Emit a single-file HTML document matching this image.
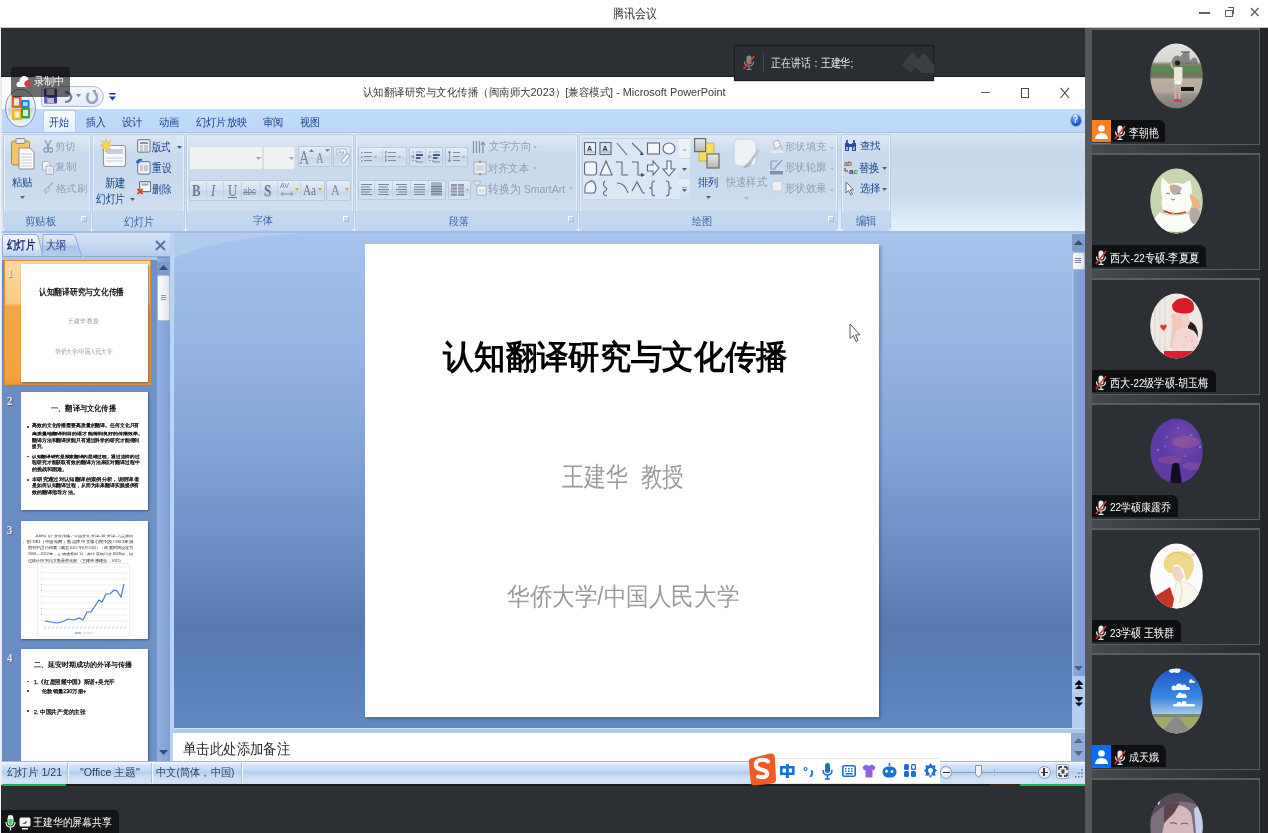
<!DOCTYPE html>
<html><head><meta charset="utf-8">
<style>
*{margin:0;padding:0;box-sizing:border-box}
html,body{width:1268px;height:833px;overflow:hidden;background:#2c2f33;font-family:"Liberation Sans",sans-serif;position:relative}
.a{position:absolute}
.t{position:absolute;white-space:nowrap;line-height:1;transform-origin:0 0}
.serif{font-family:"Liberation Serif",serif}
.grp{position:absolute;top:133.8px;height:97.7px;border:1px solid #bcd0e8;border-radius:3px;background:linear-gradient(#dde8f5,#c9daee 22%,#ccdcef 65%,#d6e6f6);box-shadow:inset 1px 0 0 #e6effa,inset -1px 0 0 #e6effa}
.glab{position:absolute;left:0;right:0;bottom:0;height:19px;background:linear-gradient(#c4daf1,#c0d6ef);border-radius:0 0 3px 3px}
.lnch{position:absolute;top:215.5px;width:6px;height:6px;border:1px solid #a8bcd4;border-left-color:#fff;border-top-color:#fff}
.btn{position:absolute;border:1px solid #b6cae2;border-radius:2px;background:linear-gradient(#e6eef8,#d2dfef 50%,#c6d6ea 51%,#d6e2f1)}
.sep{position:absolute;width:1px;height:17px;background:#c4d4e8}
.thumb{position:absolute;left:20.7px;width:127.8px;height:118px;background:#fff;box-shadow:1px 1px 2px rgba(20,40,80,.55)}
.num{font-size:13px;color:#f4efd6;font-weight:bold;transform:scaleX(.82);text-shadow:1px 1px 1px rgba(60,60,60,.6)}
.ssep{position:absolute;top:763px;width:2px;height:20px;border-left:1px solid #a9bfdc;border-right:1px solid #f2f7fd}
.tile{position:absolute;left:1092px;width:168px;height:117px;background:#2c2f33;border-top:2px solid #5a5d61;border-bottom:1.5px solid #5a5d61;border-right:1.5px solid #5a5d61}
.nb{position:absolute;left:1092px;height:21.5px;background:#0f1011;border-radius:0 6px 0 0}
</style></head><body>
<!-- ===== TOP BAR ===== -->
<div class="a" style="left:0;top:0;width:1268px;height:27px;background:#fff"></div>
<div class="a" style="left:0;top:27px;width:1268px;height:1px;background:#c8c8c8"></div>
<div class="a" style="left:1199px;top:12px;width:11px;height:1.6px;background:#5d6066"></div>
<div class="a" style="left:1225px;top:9.5px;width:7.5px;height:7.5px;border:1.5px solid #5d6066"></div>
<div class="a" style="left:1228px;top:7px;width:6px;height:7px;border-top:1.5px solid #5d6066;border-right:1.5px solid #5d6066"></div>
<svg class="a" style="left:1250px;top:7px" width="10" height="10"><path d="M1 1L8.5 9M8.5 1L1 9" stroke="#5d6066" stroke-width="1.4"/></svg>

<!-- ===== PPT WINDOW ===== -->
<div class="a" style="left:1px;top:76px;width:1084px;height:1px;background:#1a1b1d"></div>
<div class="a" style="left:1px;top:77px;width:1084px;height:32px;background:#fff"></div>
<!-- window ctrls -->
<div class="a" style="left:981px;top:92px;width:9px;height:1.2px;background:#5a5a5a"></div>
<div class="a" style="left:1020.5px;top:87.5px;width:8.5px;height:10.5px;border:1.2px solid #4a4a4a"></div>
<svg class="a" style="left:1060px;top:87px" width="10" height="12"><path d="M0.6 0.8L9 11M9 0.8L0.6 11" stroke="#4a4a4a" stroke-width="1.1"/></svg>
<!-- QAT -->
<div class="a" style="left:41px;top:86px;width:63px;height:21px;border:1px solid #b4bccb;border-radius:3px 11px 11px 3px;background:linear-gradient(#f4f7fb,#e6ecf4)"></div>
<svg class="a" style="left:43px;top:88px" width="16" height="17" viewBox="0 0 16 17">
 <rect x="1" y="0.5" width="13" height="15" rx="1" fill="#3c3c9c"/>
 <rect x="3.5" y="1" width="8" height="6" fill="#e8e8f4"/>
 <rect x="4" y="10" width="7" height="5" fill="#b8b8e0"/>
 <rect x="1" y="8" width="4" height="7" fill="#8080d8" opacity=".6"/>
</svg>
<svg class="a" style="left:62px;top:90px" width="12" height="14" viewBox="0 0 12 14"><path d="M3 2 Q10 3 9 8 Q8 12 3 12" stroke="#6f86ad" stroke-width="2.4" fill="none"/></svg>
<svg class="a" style="left:76px;top:94px" width="5" height="4"><path d="M0 0H5L2.5 3.5Z" fill="#7a8aa0"/></svg>
<svg class="a" style="left:85px;top:89px" width="13" height="15" viewBox="0 0 13 15"><path d="M4 4 A5 5.5 0 1 0 9.5 3.5" stroke="#8fa3c4" stroke-width="2.6" fill="none"/><path d="M7 1 L11 1 L10.5 6Z" fill="#8fa3c4"/></svg>
<svg class="a" style="left:109px;top:93px" width="7" height="8"><rect x="0.5" y="0" width="6" height="1.6" fill="#1f3f8a"/><path d="M0 3.5H7L3.5 7.5Z" fill="#1f3f8a"/></svg>

<!-- tab strip -->
<div class="a" style="left:2px;top:109px;width:1083px;height:23px;background:linear-gradient(#c0dbfc,#bcd7f9)"></div>
<div class="a" style="left:43px;top:110px;width:33px;height:23px;border:1px solid #b9cde5;border-bottom:none;border-radius:3px 3px 0 0;background:linear-gradient(#fafcfe,#e5eef8)"></div>
<!-- help icon -->
<div class="a" style="left:1069.5px;top:114px;width:12px;height:13px;border-radius:50%;background:radial-gradient(circle at 40% 35%,#7fb0ff,#1f55c8 60%,#173c9a);border:1px solid #9cb0cc"></div>
<div class="t" style="left:1072.5px;top:115px;font-size:10px;font-weight:bold;color:#fff;transform:scaleX(.82);transform-origin:0 0">?</div>

<!-- ribbon body -->
<div class="a" style="left:2px;top:132px;width:1083px;height:100px;background:linear-gradient(#d9e5f3 0%,#c7d8ed 18%,#cbdbef 60%,#d9e9f8 85%,#e3f2fd 100%);border-top:1px solid #a6c3e6"></div>
<div class="a" style="left:2px;top:231px;width:1083px;height:2px;background:#9fbde0"></div>
<!-- office button -->
<svg class="a" style="left:4px;top:87px" width="34" height="42" viewBox="0 0 34 42">
 <defs><linearGradient id="ob" x1="0" y1="0" x2="0" y2="1"><stop offset="0" stop-color="#f6f8fb"/><stop offset=".48" stop-color="#dfe6ee"/><stop offset=".52" stop-color="#c6d2e0"/><stop offset="1" stop-color="#f2f6fa"/></linearGradient></defs>
 <ellipse cx="16.5" cy="21" rx="14.9" ry="18.7" fill="url(#ob)" stroke="#8796ac" stroke-width="1"/>
 <ellipse cx="16.5" cy="21" rx="13.5" ry="17.3" fill="none" stroke="#ffffff" stroke-width=".8" opacity=".8"/>
 <rect x="7.5" y="9" width="10" height="12" rx="1" fill="#e8622a"/><rect x="10" y="11.5" width="5" height="7" fill="#e8e8e8"/>
 <rect x="17" y="13" width="8.5" height="8" rx="1" fill="#1a88d8"/><rect x="19" y="15" width="4.5" height="4" fill="#a8d8f8"/>
 <rect x="8" y="22" width="10" height="11" rx="1" fill="#f2b818"/><rect x="10.5" y="24.5" width="5" height="6" fill="#f8f0d8"/>
 <rect x="17" y="21" width="9" height="10.5" rx="1" fill="#3ea03a"/><rect x="19" y="23" width="5" height="6" fill="#e0f0d8"/>
</svg>
<!-- ribbon groups -->
<div class="grp" style="left:3px;width:88px"><div class="glab"></div></div>
<div class="grp" style="left:92px;width:93px"><div class="glab"></div></div>
<div class="grp" style="left:186px;width:168px"><div class="glab"></div></div>
<div class="grp" style="left:355px;width:223px"><div class="glab"></div></div>
<div class="grp" style="left:579px;width:259px"><div class="glab"></div></div>
<div class="grp" style="left:841px;width:50px"><div class="glab"></div></div>
<!-- launchers -->
<div class="lnch" style="left:81px"></div>
<div class="lnch" style="left:343px"></div>
<div class="lnch" style="left:568px"></div>
<div class="lnch" style="left:828px"></div>

<!-- group1 icons -->
<svg class="a" style="left:11px;top:138px" width="24" height="32" viewBox="0 0 24 32">
 <rect x="0.5" y="3" width="18" height="24" rx="2" fill="#f2c46a" stroke="#b88a36" stroke-width="1"/>
 <rect x="5" y="0.5" width="9" height="5" rx="1" fill="#e8e8e8" stroke="#8a8a8a" stroke-width="1"/>
 <path d="M8 10H19L23 14V31H8Z" fill="#fbfbfb" stroke="#8c8c8c" stroke-width="1"/>
 <path d="M10 16H21M10 19H21M10 22H21M10 25H21M10 28H21" stroke="#c8c8c8" stroke-width="1"/>
</svg>
<svg class="a" style="left:20px;top:196px" width="5" height="4"><path d="M0 0H5L2.5 3Z" fill="#4a5d80"/></svg>
<svg class="a" style="left:43px;top:140px" width="10" height="13" viewBox="0 0 10 13"><path d="M2 0L6 8M8 0L4 8" stroke="#8f9ab0" stroke-width="1.3"/><circle cx="3" cy="10" r="2.2" fill="none" stroke="#8f9ab0" stroke-width="1.3"/><circle cx="7.5" cy="10" r="2.2" fill="none" stroke="#8f9ab0" stroke-width="1.3"/></svg>
<svg class="a" style="left:42px;top:161px" width="12" height="14" viewBox="0 0 12 14"><path d="M0.5 0.5H6L8 2.5V9H0.5Z" fill="#f4f6f8" stroke="#a8b0bc"/><path d="M4 5H9.5L11.5 7V13.5H4Z" fill="#f4f6f8" stroke="#a8b0bc"/><path d="M5.5 8H10M5.5 10H10M5.5 12H10" stroke="#c0c6d0" stroke-width=".8"/></svg>
<svg class="a" style="left:43px;top:182px" width="11" height="12" viewBox="0 0 11 12"><path d="M10 0.5L5 6" stroke="#aab4c4" stroke-width="1.8"/><path d="M1 8 L5 5 L7 7.5 L3 11.5 Z" fill="#c8ced8" stroke="#a0aabb" stroke-width=".8"/></svg>

<!-- group2 icons -->
<svg class="a" style="left:100px;top:139px" width="27" height="30" viewBox="0 0 27 30">
 <rect x="3.5" y="6.5" width="22" height="21" rx="2" fill="#f8f9fb" stroke="#8e96a4" stroke-width="1.2"/>
 <rect x="6" y="10" width="17" height="5" fill="#c8ccd8"/>
 <path d="M6 19H23M6 22H23" stroke="#c4c8d2" stroke-width="1"/>
 <path d="M6 0L7 4L10.5 1.5L8.5 5.5L12 6.5L8.5 7.5L10.5 11L7 9L6 13L5 9L1.5 11L3.5 7.5L0 6.5L3.5 5.5L1.5 1.5L5 4Z" fill="#f8dc40" stroke="#e0b020" stroke-width=".5"/>
</svg>
<svg class="a" style="left:130px;top:198px" width="5" height="4"><path d="M0 0H5L2.5 3Z" fill="#4a5d80"/></svg>
<svg class="a" style="left:137px;top:139px" width="14" height="14" viewBox="0 0 14 14"><rect x="0.6" y="0.6" width="12.5" height="12.5" rx="1.5" fill="#f0f2f6" stroke="#7c8594" stroke-width="1.2"/><rect x="3" y="3" width="8" height="2" fill="#8890a0"/><path d="M3 7H6M3 9H6M3 11H6M7 7H11M7 9H11M7 11H11" stroke="#9098a8" stroke-width=".9"/></svg>
<svg class="a" style="left:177px;top:146px" width="5" height="4"><path d="M0 0H5L2.5 3Z" fill="#4a5d80"/></svg>
<svg class="a" style="left:136px;top:159px" width="15" height="16" viewBox="0 0 15 16"><rect x="1.6" y="2.6" width="12.5" height="12.5" rx="1.5" fill="#f0f2f6" stroke="#7c8594" stroke-width="1.2"/><path d="M4 7H7M4 9H7M4 11H7M8 7H12M8 9H12M8 11H12" stroke="#9098a8" stroke-width=".9"/><path d="M1 4 Q2 0 6 1" stroke="#2a5cc8" stroke-width="2" fill="none"/><path d="M0 2L3 5L4 1Z" fill="#2a5cc8"/></svg>
<svg class="a" style="left:137px;top:181px" width="14" height="14" viewBox="0 0 14 14"><rect x="2.6" y="0.6" width="11" height="10" rx="1" fill="#f4f6f9" stroke="#6c7584" stroke-width="1.2"/><rect x="4.5" y="2.5" width="7" height="2" fill="#a0a8b8"/><path d="M0.5 8L5.5 13M5.5 8L0.5 13" stroke="#e03a20" stroke-width="1.8"/></svg>
<!-- group3 font -->
<div class="a" style="left:188.5px;top:146.3px;width:74px;height:24px;background:#eff1f3;border:1px solid #d6dde6"></div>
<div class="a" style="left:263px;top:146.3px;width:32px;height:24px;background:#eff1f3;border:1px solid #d6dde6"></div>
<svg class="a" style="left:256px;top:157px" width="5" height="4"><path d="M0 0H5L2.5 3Z" fill="#9aa4b4"/></svg>
<svg class="a" style="left:288.5px;top:157px" width="5" height="4"><path d="M0 0H5L2.5 3Z" fill="#9aa4b4"/></svg>
<div class="btn" style="left:297.5px;top:145.6px;width:34px;height:21px"></div>
<div class="btn" style="left:333.3px;top:145.6px;width:18px;height:21px"></div>
<div class="btn" style="left:188.5px;top:180.4px;width:136px;height:21px"></div>
<div class="btn" style="left:326.2px;top:180.4px;width:25px;height:21px"></div>
<div class="sep" style="left:206px;top:182px"></div><div class="sep" style="left:223px;top:182px"></div><div class="sep" style="left:241px;top:182px"></div><div class="sep" style="left:260px;top:182px"></div><div class="sep" style="left:277px;top:182px"></div><div class="sep" style="left:300px;top:182px"></div>
<div class="t serif" style="left:299px;top:148px;font-size:19px;color:#7a86a0;transform:scaleX(.75);transform-origin:0 0">A</div>
<svg class="a" style="left:309px;top:149px" width="5" height="3"><path d="M0 3H5L2.5 0Z" fill="#7a86a0"/></svg>
<div class="t serif" style="left:316px;top:152px;font-size:14px;color:#7a86a0;transform:scaleX(.75);transform-origin:0 0">A</div>
<svg class="a" style="left:325px;top:149px" width="5" height="3"><path d="M0 0H5L2.5 3Z" fill="#7a86a0"/></svg>
<svg class="a" style="left:336px;top:148px" width="14" height="16" viewBox="0 0 14 16"><rect x="1" y="1" width="9" height="6" fill="#fff" stroke="#9aa4b8" stroke-width=".8"/><text x="2" y="6" font-size="5" fill="#7a86a0" font-family="Liberation Sans">Aa</text><path d="M12 5 L5 13 L7.5 15.5 L13.5 8Z" fill="#f4f4f8" stroke="#a0a8b8" stroke-width="1"/></svg>
<div class="t serif" style="left:192px;top:183px;font-size:16px;font-weight:bold;color:#6a7894;transform:scaleX(.8);transform-origin:0 0">B</div>
<div class="t serif" style="left:211px;top:183px;font-size:16px;font-style:italic;color:#6a7894;transform:scaleX(.8);transform-origin:0 0">I</div>
<div class="t serif" style="left:228px;top:183px;font-size:16px;color:#6a7894;text-decoration:underline;transform:scaleX(.8);transform-origin:0 0">U</div>
<div class="t" style="left:243px;top:187px;font-size:10px;color:#7a86a0;text-decoration:line-through;transform:scaleX(.8);transform-origin:0 0">abc</div>
<div class="t serif" style="left:264px;top:183px;font-size:16px;font-weight:bold;color:#6a7894;transform:scaleX(.8);transform-origin:0 0;text-shadow:1px 1px 1px #b0b8c8">S</div>
<div class="t" style="left:280px;top:182px;font-size:8px;color:#7a86a0;transform:scaleX(.9);transform-origin:0 0">AV</div>
<svg class="a" style="left:280px;top:191px" width="14" height="6"><path d="M1 3H13M1 3L3.5 1M1 3L3.5 5M13 3L10.5 1M13 3L10.5 5" stroke="#8894aa" stroke-width="1"/></svg>
<svg class="a" style="left:295px;top:188px" width="4" height="3"><path d="M0 0H4L2 3Z" fill="#e0a050"/></svg>
<div class="t serif" style="left:303px;top:184px;font-size:14px;color:#6a7894;transform:scaleX(.8);transform-origin:0 0">Aa</div>
<svg class="a" style="left:318px;top:188px" width="4" height="3"><path d="M0 0H4L2 3Z" fill="#e0a050"/></svg>
<div class="t serif" style="left:331px;top:183px;font-size:15px;color:#7a86a0;transform:scaleX(.8);transform-origin:0 0">A</div>
<svg class="a" style="left:345px;top:188px" width="4" height="3"><path d="M0 0H4L2 3Z" fill="#e0a050"/></svg>

<!-- group4 paragraph -->
<div class="btn" style="left:357.6px;top:147.4px;width:49px;height:20px"></div>
<div class="btn" style="left:408.7px;top:147.4px;width:34px;height:20px"></div>
<div class="btn" style="left:444.6px;top:147.4px;width:23px;height:20px"></div>
<div class="btn" style="left:357.6px;top:179.6px;width:88px;height:20px"></div>
<div class="btn" style="left:448px;top:179.6px;width:23px;height:20px"></div>
<div class="sep" style="left:382px;top:149px;height:16px"></div>
<div class="sep" style="left:425px;top:149px;height:16px"></div>
<div class="sep" style="left:374px;top:181px;height:16px"></div><div class="sep" style="left:392px;top:181px;height:16px"></div><div class="sep" style="left:410px;top:181px;height:16px"></div><div class="sep" style="left:428px;top:181px;height:16px"></div>
<svg class="a" style="left:359px;top:150px" width="110" height="14" viewBox="0 0 110 14">
 <g fill="#8894aa"><rect x="2" y="2" width="1.5" height="1.5"/><rect x="2" y="6" width="1.5" height="1.5"/><rect x="2" y="10" width="1.5" height="1.5"/></g>
 <g stroke="#7f8ba2" stroke-width="1"><path d="M5 2.5H13M5 6.5H13M5 10.5H13"/></g>
 <path d="M15 6H18L16.5 8Z" fill="#9aa4b8"/>
 <g fill="#8894aa"><rect x="26" y="1" width="1.5" height="3"/><rect x="26" y="5" width="1.5" height="3"/><rect x="26" y="9" width="1.5" height="3"/></g>
 <g stroke="#7f8ba2" stroke-width="1"><path d="M29 2.5H37M29 6.5H37M29 10.5H37"/></g>
 <path d="M39 6H42L40.5 8Z" fill="#9aa4b8"/>
 <path d="M57 2H64" stroke="#98a4b8" stroke-width="1.2"/><rect x="57" y="4" width="7" height="2" fill="#4a5c88"/><rect x="57" y="7" width="4.5" height="2" fill="#4a5c88"/><path d="M57 10V12H64" stroke="#7a88a0" stroke-width="1" fill="none"/><path d="M53 2H55M53 10.5H55" stroke="#98a4b8"/><path d="M52 6.5L55 4.5V8.5Z" fill="#8894aa"/>
 <path d="M74 2H81" stroke="#98a4b8" stroke-width="1.2"/><rect x="74" y="4" width="7" height="2" fill="#4a5c88"/><rect x="74" y="7" width="4.5" height="2" fill="#4a5c88"/><path d="M74 10V12H81" stroke="#7a88a0" stroke-width="1" fill="none"/><path d="M70 2H72M70 10.5H72" stroke="#98a4b8"/><path d="M72.5 6.5L69.5 4.5V8.5Z" fill="#8894aa"/>
 <g stroke="#7f8ba2" stroke-width="1"><path d="M94 2.5H101M94 6.5H101M94 10.5H101M90.5 1V12"/></g><path d="M89 3L90.5 1L92 3M89 10L90.5 12L92 10" stroke="#7f8ba2" fill="none"/>
 <path d="M103 6H106L104.5 8Z" fill="#9aa4b8"/>
</svg>
<svg class="a" style="left:359px;top:182px" width="112" height="16" viewBox="0 0 112 16">
 <g stroke="#7884a0" stroke-width="1.1">
  <path d="M2 2.5H13M2 5H11M2 7.5H13M2 10H11M2 12.5H13"/>
  <path d="M19 2.5H30M20 5H29M19 7.5H30M20 10H29M19 12.5H30"/>
  <path d="M37 2.5H48M39 5H48M37 7.5H48M39 10H48M37 12.5H48"/>
  <path d="M55 2.5H66M55 5H66M55 7.5H66M55 10H66M55 12.5H66"/>
 </g>
 <rect x="72" y="2" width="11" height="12" fill="#a8b0c4"/><g stroke="#6e7a94" stroke-width="1"><path d="M72 4.5H83M72 7H83M72 9.5H83M72 12H83"/></g><path d="M72 1H83" stroke="#6e7a94"/>
 <g fill="#8e98ae"><rect x="92" y="2" width="6" height="12"/><rect x="99" y="2" width="6" height="12"/></g><g stroke="#dfe6f0" stroke-width=".8"><path d="M92 5H105M92 8H105M92 11H105"/></g>
 <path d="M107 7H110L108.5 9Z" fill="#9aa4b8"/>
</svg>
<svg class="a" style="left:472px;top:141px" width="15" height="13" viewBox="0 0 15 13"><path d="M1.5 0V12M4.5 0V12M7.5 0V12" stroke="#8090a8" stroke-width="1.2"/><path d="M11 12V2M9 4L11 1L13 4" stroke="#8090a8" stroke-width="1.2" fill="none"/></svg>
<svg class="a" style="left:473px;top:160px" width="14" height="16" viewBox="0 0 14 16"><rect x="1" y="2" width="12" height="12" fill="#eef0f4" stroke="#9aa4b8"/><path d="M3 6H11M3 8H11M3 10H11" stroke="#b4bcca"/><path d="M7 0V3M5.5 1.5L7 3L8.5 1.5M7 16V13M5.5 14.5L7 13L8.5 14.5" stroke="#8894aa" fill="none"/></svg>
<svg class="a" style="left:472px;top:180px" width="15" height="16" viewBox="0 0 15 16"><path d="M1 1H9L7 5H3Z" fill="#dfe4ec" stroke="#a8b0c0" stroke-width=".8"/><rect x="5" y="6" width="9" height="9" fill="#f4f6f9" stroke="#a8b0c0"/><path d="M8 9V13M11 9V13" stroke="#b8c0cc"/></svg>
<svg class="a" style="left:533px;top:146px" width="4" height="3"><path d="M0 0H4L2 3Z" fill="#b0b8c8"/></svg>
<svg class="a" style="left:533px;top:167px" width="4" height="3"><path d="M0 0H4L2 3Z" fill="#b0b8c8"/></svg>
<svg class="a" style="left:569px;top:187px" width="4" height="3"><path d="M0 0H4L2 3Z" fill="#b0b8c8"/></svg>
<!-- group5 drawing -->
<div class="a" style="left:582.3px;top:138.2px;width:108px;height:62px;border:1px solid #c6d6ea;background:#dbe7f5"></div>
<div class="a" style="left:678.7px;top:138.6px;width:11px;height:61px;background:linear-gradient(#eef3f9,#dde8f4)"></div>
<div class="a" style="left:678.7px;top:158px;width:11px;height:21px;border-top:1px solid #c8d6e8;border-bottom:1px solid #c8d6e8;background:linear-gradient(#e4eef9,#cfdff1)"></div>
<div class="a" style="left:678.7px;top:179px;width:11px;height:21px;background:linear-gradient(#e4eef9,#cfdff1)"></div>
<svg class="a" style="left:682px;top:148px" width="5" height="3"><path d="M0 3H5L2.5 0Z" fill="#b8c4d4"/></svg>
<svg class="a" style="left:682px;top:168px" width="5" height="3"><path d="M0 0H5L2.5 3Z" fill="#4a6090"/></svg>
<svg class="a" style="left:682px;top:187px" width="5" height="5"><path d="M0 0H5" stroke="#4a6090"/><path d="M0 2H5L2.5 5Z" fill="#4a6090"/></svg>
<svg class="a" style="left:583px;top:141px" width="95" height="56" viewBox="0 0 95 56">
 <g stroke="#5a6680" stroke-width="1.1" fill="none">
  <rect x="1.5" y="1.5" width="11" height="12" fill="#eef1f6"/>
  <rect x="17" y="1.5" width="11" height="12" fill="#dfe4ec"/>
  <path d="M34 2L44 14"/>
  <path d="M49 2L60 13"/>
  <rect x="64.5" y="2" width="12" height="11" fill="#f2f5f9"/>
  <ellipse cx="86" cy="7.5" rx="6" ry="5.5" fill="#f2f5f9"/>
  <rect x="1.5" y="21" width="12" height="13" rx="2.5" fill="#f2f5f9"/>
  <path d="M17 34L23 20L29 34Z" fill="#f2f5f9"/>
  <path d="M33 21H39V34H45"/>
  <path d="M49 21H55V34H60"/>
  <path d="M64.5 24H70V20L76 27L70 34V30H64.5Z" fill="#f2f5f9"/>
  <path d="M84 20H88V28H92L86 35L80 28H84Z" fill="#f2f5f9"/>
  <path d="M2 52 Q1 42 6 41 Q10 38 12 43 Q14 49 11 52Z" fill="#f2f5f9"/>
  <path d="M22 40 Q19 43 22 46 Q26 48 21 51 Q19 54 24 55"/>
  <path d="M34 42 Q42 42 45 52"/>
  <path d="M49 50 L54 41 L60 52 L62 52"/>
  <path d="M72 40 Q69 40 69 43 L69 46 L67 47 L69 48 L69 52 Q69 55 72 55"/>
  <path d="M83 40 Q86 40 86 43 L86 46 L88 47 L86 48 L86 52 Q86 55 83 55"/>
 </g>
 <path d="M58 11L61 14L57 14Z" fill="#3a4a70"/><path d="M58 32L62 34L58 36Z" fill="#3a4a70"/>
 <text x="4" y="10" font-size="7" font-weight="bold" fill="#333" font-family="Liberation Sans">A</text>
 <text x="19.5" y="10" font-size="7" font-weight="bold" fill="#333" font-family="Liberation Sans">A</text>
 <path d="M3 11H12M18.5 11H27" stroke="#8890a4" stroke-width=".8"/>
</svg>
<svg class="a" style="left:694px;top:138px" width="27" height="32" viewBox="0 0 27 32">
 <rect x="5" y="5" width="15" height="18" fill="#f5dd60" stroke="#c8b040" stroke-width=".8"/>
 <rect x="0.6" y="0.6" width="11" height="13" fill="url(#gg1)" stroke="#6a6a6a" stroke-width="1.2"/>
 <rect x="13" y="16" width="12" height="14" fill="url(#gg1)" stroke="#6a6a6a" stroke-width="1.2"/>
 <defs><linearGradient id="gg1" x1="0" y1="0" x2="0" y2="1"><stop offset="0" stop-color="#e8e8e8"/><stop offset="1" stop-color="#b8b8b8"/></linearGradient></defs>
</svg>
<svg class="a" style="left:706px;top:196px" width="5" height="4"><path d="M0 0H5L2.5 3Z" fill="#4a5d80"/></svg>
<svg class="a" style="left:733px;top:138px" width="28" height="32" viewBox="0 0 28 32">
 <rect x="1" y="1" width="22" height="27" rx="5" fill="#eef1f5" stroke="#c8d0dc" stroke-width="1"/>
 <path d="M26 12 L17 24" stroke="#b8c0cc" stroke-width="2.5"/><path d="M17 23 Q12 26 10 30 Q16 30 19 25Z" fill="#b0b8c4"/>
</svg>
<svg class="a" style="left:744px;top:197px" width="5" height="3"><path d="M0 0H5L2.5 3Z" fill="#a8b0c0"/></svg>
<svg class="a" style="left:770px;top:139px" width="14" height="14" viewBox="0 0 14 14"><path d="M3 3L8 1L11 7L5 10Z" fill="#f0f2f5" stroke="#a8b0bc"/><path d="M11 7Q13 9 12 11" stroke="#b0b8c4" fill="none"/><rect x="0" y="11.5" width="13" height="2.5" fill="#e8ecf2"/></svg>
<svg class="a" style="left:770px;top:159px" width="14" height="16" viewBox="0 0 14 16"><path d="M1 2H8M1 2V10M1 10H6" stroke="#8f9aac" stroke-width="1.2" fill="none"/><path d="M12 1L5 9" stroke="#8f9aac" stroke-width="1.4"/><rect x="0" y="12" width="13" height="3.5" fill="#8090b0"/></svg>
<svg class="a" style="left:771px;top:180px" width="12" height="13" viewBox="0 0 12 13"><rect x="1" y="1" width="10" height="10" rx="2" fill="#eef0f4" stroke="#c0c8d4"/><path d="M3 12H11V4" stroke="#d0d6de" stroke-width="1.5" fill="none"/></svg>
<svg class="a" style="left:830px;top:147px" width="4" height="3"><path d="M0 0H4L2 3Z" fill="#b8c0cc"/></svg>
<svg class="a" style="left:830px;top:168px" width="4" height="3"><path d="M0 0H4L2 3Z" fill="#b8c0cc"/></svg>
<svg class="a" style="left:830px;top:189px" width="4" height="3"><path d="M0 0H4L2 3Z" fill="#b8c0cc"/></svg>

<!-- group6 editing -->
<svg class="a" style="left:844px;top:139px" width="13" height="13" viewBox="0 0 13 13"><path d="M1 4H5V12H1ZM8 4H12V12H8Z" fill="#2c4c98"/><path d="M2 1H4V4H2ZM9 1H11V4H9Z" fill="#3c5cb0"/><rect x="4.5" y="5" width="4" height="3" fill="#2c4c98"/><rect x="2" y="8" width="2" height="3" fill="#9ab4e8"/><rect x="9" y="8" width="2" height="3" fill="#9ab4e8"/></svg>
<svg class="a" style="left:844px;top:160px" width="14" height="15" viewBox="0 0 14 15"><text x="0" y="6" font-size="7" fill="#444" font-family="Liberation Sans">ab</text><text x="5" y="14" font-size="8" font-weight="bold" fill="#444" font-family="Liberation Sans">a</text><text x="9.5" y="14" font-size="8" font-weight="bold" fill="#20a040" font-family="Liberation Sans">c</text><path d="M1 8V11H4" stroke="#333" fill="none" stroke-width=".9"/></svg>
<svg class="a" style="left:845px;top:181px" width="10" height="15" viewBox="0 0 10 15"><path d="M1 1V12L3.5 9.5L6 14L7.5 13.2L5.2 8.8H8.5Z" fill="#f6f7f9" stroke="#5a6272" stroke-width=".9"/></svg>
<svg class="a" style="left:882px;top:167px" width="5" height="3"><path d="M0 0H5L2.5 3Z" fill="#4a5d80"/></svg>
<svg class="a" style="left:882px;top:188px" width="5" height="3"><path d="M0 0H5L2.5 3Z" fill="#4a5d80"/></svg>
<!-- ===== BODY AREA ===== -->
<div class="a" style="left:2px;top:233px;width:1083px;height:528px;background:#a9c7ef"></div>
<!-- left pane -->
<div class="a" style="left:2px;top:233px;width:168px;height:24px;background:linear-gradient(#d6e5f7,#b4cdee)"></div>
<svg class="a" style="left:2px;top:234px" width="168" height="23" viewBox="0 0 168 23">
 <defs>
  <linearGradient id="tg1" x1="0" y1="0" x2="0" y2="1"><stop offset="0" stop-color="#f4f8fd"/><stop offset=".55" stop-color="#dce8f8"/><stop offset="1" stop-color="#b6cff0"/></linearGradient>
  <linearGradient id="tg2" x1="0" y1="0" x2="0" y2="1"><stop offset="0" stop-color="#e2ebf8"/><stop offset=".45" stop-color="#c8d9f1"/><stop offset=".55" stop-color="#a8c2ea"/><stop offset="1" stop-color="#b4ccee"/></linearGradient>
 </defs>
 <path d="M40 22.5 L76 22.5 L80 22.5 L73 2 Q72 0.5 70 0.5 L41 0.5 Z" fill="url(#tg2)" stroke="#8eaad4" stroke-width="1"/>
 <path d="M0.5 22.5 L0.5 2.5 Q0.5 0.5 3 0.5 L33 0.5 Q35 0.5 36 2 L41 22.5Z" fill="url(#tg1)" stroke="#8eaad4" stroke-width="1"/>
 <path d="M82 22.5H168" stroke="#8eaad4"/>
</svg>
<svg class="a" style="left:155px;top:240px" width="11" height="11"><path d="M1 1L10 10M10 1L1 10" stroke="#5072a8" stroke-width="1.8"/></svg>
<!-- thumbnails pane -->
<div class="a" style="left:2px;top:257px;width:168px;height:504px;background:linear-gradient(90deg,#6a8ec3,#6b8fc3 60%,#6f93c8)"></div>

<div class="a" style="left:2px;top:257px;width:155px;height:3px;background:#aac6ee"></div>
<!-- scrollbar -->
<div class="a" style="left:157px;top:258px;width:13px;height:503px;background:linear-gradient(90deg,#8eb0e0,#7f9fd0)"></div>
<div class="a" style="left:157px;top:261.7px;width:13px;height:13px;background:#7b9bcc"></div>
<svg class="a" style="left:159px;top:265px" width="9" height="5"><path d="M0 5H9L4.5 0Z" fill="#3c4c6c"/></svg>
<div class="a" style="left:157px;top:275px;width:12.5px;height:46px;border-radius:2px;background:linear-gradient(90deg,#fdfdfe,#dfe5ee);border:1px solid #b0bccc"></div>
<svg class="a" style="left:161px;top:295px" width="5" height="6"><path d="M0 0.5H5M0 2.5H5M0 4.5H5" stroke="#8a96a8"/></svg>
<svg class="a" style="left:159px;top:750px" width="9" height="5"><path d="M0 0H9L4.5 5Z" fill="#3c4c6c"/></svg>
<div class="a" style="left:170px;top:233px;width:3px;height:528px;background:#b6d2f6"></div>
<!-- selection highlight -->
<div class="a" style="left:3.5px;top:260.4px;width:147.5px;height:125px;border:1px solid #e4923a;background:linear-gradient(#fbd9a0,#f8cb86 34%,#f3a744 37%,#f2a440 92%,#ee9a34)"></div>
<!-- slide thumbs -->
<div class="thumb" style="top:264.4px"></div>
<div class="thumb" style="top:392.2px"></div>
<div class="thumb" style="top:520.7px"></div>
<div class="thumb" style="top:648.9px;height:113px"></div>
<div class="t serif num" style="left:7px;top:266px">1</div>
<div class="t serif num" style="left:6.5px;top:394px;color:#e4ecf4">2</div>
<div class="t serif num" style="left:6.5px;top:523px;color:#e4ecf4">3</div>
<div class="t serif num" style="left:6.5px;top:651px;color:#e4ecf4">4</div>
<!-- thumb 2 content -->
<div class="a" style="left:27.3px;top:426px;width:1.5px;height:1.5px;background:#555"></div>
<div class="a" style="left:27.3px;top:455.5px;width:1.5px;height:1.5px;background:#555"></div>
<div class="a" style="left:27.3px;top:479px;width:1.5px;height:1.5px;background:#555"></div>
<!-- thumb 3 chart -->
<svg class="a" style="left:37px;top:563px" width="94" height="75" viewBox="0 0 94 75">
 <rect x="0.5" y="0.5" width="92" height="73" fill="#fff" stroke="#eceef2"/>
 <g stroke="#e4e6ea" stroke-width=".7"><path d="M6 4H90M6 10H90M6 16H90M6 22H90M6 28H90M6 34H90M6 40H90M6 46H90M6 52H90M6 58H90"/></g>
 <g fill="#b8bcc4"><rect x="4" y="3" width="1" height="1"/><rect x="4" y="9" width="1" height="1"/><rect x="4" y="15" width="1" height="1"/><rect x="4" y="21" width="1" height="1"/><rect x="4" y="27" width="1" height="1"/><rect x="4" y="33" width="1" height="1"/><rect x="4" y="39" width="1" height="1"/><rect x="4" y="45" width="1" height="1"/><rect x="4" y="51" width="1" height="1"/><rect x="4" y="57" width="1" height="1"/></g>
 <path d="M8 58 L14 59 L20 60 L26 58.5 L31 56 L37 57 L42 55 L46 57 L50 49 L54 49 L58 43 L62 37 L65 39 L69 31 L73 31 L77 27 L80 28 L84 34 L87 21" stroke="#4a78c8" stroke-width="1.2" fill="none"/>
 <g stroke="#c0c4cc" stroke-width=".8"><path d="M7 66L9 63M11 66L13 63M15 66L17 63M19 66L21 63M23 66L25 63M27 66L29 63M31 66L33 63M35 66L37 63M39 66L41 63M43 66L45 63M47 66L49 63M51 66L53 63M55 66L57 63M59 66L61 63M63 66L65 63M67 66L69 63M71 66L73 63M75 66L77 63M79 66L81 63M83 66L85 63M87 66L89 63"/></g>
 <path d="M38 70H44" stroke="#4a78c8" stroke-width="1"/><path d="M46 70H56" stroke="#d0d4da" stroke-width="1"/>
</svg>
<div class="a" style="left:27.3px;top:680.5px;width:1.5px;height:1.5px;background:#555"></div>
<div class="a" style="left:27.3px;top:690px;width:1.5px;height:1.5px;background:#555"></div>
<div class="a" style="left:27.3px;top:710px;width:1.5px;height:1.5px;background:#555"></div>

<!-- main slide area -->
<div class="a" style="left:173px;top:233px;width:899px;height:495px;overflow:hidden;background:linear-gradient(#a5c3eb 0%,#97b6e2 20%,#86a8d8 40%,#6d91c6 62%,#5679b0 80%,#5a80b9 90%,#6189c3 100%)">
  <svg class="a" style="left:0;top:0" width="200" height="40"><path d="M0 0 H130 Q40 6 0 26 Z" fill="rgba(255,255,255,.16)"/></svg>
</div>
<div class="a" style="left:173px;top:233px;width:1px;height:495px;background:#c0d8f6"></div>
<!-- slide -->
<div class="a" style="left:367px;top:246px;width:514px;height:473px;background:rgba(30,50,90,.35);filter:blur(1.5px)"></div>
<div class="a" style="left:365px;top:244px;width:514.3px;height:473px;background:#fff"></div>
<!-- main scrollbar -->
<div class="a" style="left:1071.6px;top:233.8px;width:13.4px;height:494.5px;background:linear-gradient(90deg,#a6c4ee 0,#a6c4ee 1px,#86a6d8 2px,#7e9ecf)"></div>
<div class="a" style="left:1071.6px;top:233.8px;width:13.4px;height:17px;background:#7e9dcc"></div>
<svg class="a" style="left:1074px;top:240px" width="9" height="5"><path d="M0 5H9L4.5 0Z" fill="#3e4e6e"/></svg>
<div class="a" style="left:1071.6px;top:252px;width:13.4px;height:18px;border-radius:2px;background:linear-gradient(90deg,#fdfdfe,#dde4ee);border:1px solid #aab8cc"></div>
<svg class="a" style="left:1075px;top:258px" width="6" height="6"><path d="M0 0.5H6M0 2.5H6M0 4.5H6" stroke="#7a8698"/></svg>

<svg class="a" style="left:1074px;top:666px" width="9" height="5"><path d="M0 0H9L4.5 5Z" fill="#4e5e7e"/></svg>
<div class="a" style="left:1071.6px;top:676px;width:13.4px;height:52px;background:#b0cdf2"></div>
<svg class="a" style="left:1074.5px;top:680px" width="8" height="10"><path d="M0 4H8L4 0Z M0 9H8L4 5Z" fill="#111"/><path d="M0 4.5H8" stroke="#111"/></svg>
<svg class="a" style="left:1074.5px;top:697px" width="8" height="10"><path d="M0 1H8L4 5Z M0 5.5H8L4 9.5Z" fill="#111"/><path d="M0 0.5H8" stroke="#111"/></svg>
<!-- notes -->
<div class="a" style="left:173px;top:728px;width:912px;height:5px;background:#acc9f0;border-top:1px solid #cfe2fa"></div>
<div class="a" style="left:173px;top:733px;width:898px;height:28px;background:#fff"></div>
<div class="a" style="left:1071px;top:733px;width:14px;height:28px;background:#8eabd8"></div>
<svg class="a" style="left:1074px;top:738px" width="9" height="5"><path d="M0 5H9L4.5 0Z" fill="#56668a"/></svg>
<svg class="a" style="left:1074px;top:751px" width="9" height="5"><path d="M0 0H9L4.5 5Z" fill="#56668a"/></svg>
<!-- status bar -->
<div class="a" style="left:2px;top:761px;width:1083px;height:24px;background:linear-gradient(#f6fbff 0,#d4e4fa 14%,#c0d8f4 38%,#b4cef2 46%,#c8dcf2 62%,#d6e4f4 85%,#c6dbf4 92%,#dcecfc 100%);border-top:1px solid #a6b6c8"></div>
<div class="ssep" style="left:67px"></div>
<div class="ssep" style="left:150.5px"></div>
<div class="ssep" style="left:240.5px"></div>
<div class="a" style="left:2px;top:784px;width:64px;height:2px;background:#1fae5a"></div>
<div class="a" style="left:66px;top:784px;width:924px;height:2px;background:#1c1a19"></div>
<div class="a" style="left:990px;top:784px;width:30px;height:2px;background:#3a2b22"></div>
<div class="a" style="left:1020px;top:784px;width:65px;height:2px;background:#1fb060"></div>
<!-- zoom controls -->
<div class="a" style="left:940px;top:765.5px;width:12px;height:13px;border-radius:50%;border:1px solid #8ea2c0;background:radial-gradient(circle at 50% 30%,#fff,#d4def0)"></div>
<div class="a" style="left:942.5px;top:771.5px;width:7px;height:1.6px;background:#303848"></div>
<div class="a" style="left:952px;top:772px;width:85px;height:1px;background:#8aa0c0"></div>
<div class="a" style="left:994px;top:769px;width:1px;height:7px;background:#a8b8d0"></div>
<svg class="a" style="left:975px;top:765px" width="7" height="13"><path d="M0.5 0.5H6.5V9L3.5 12.5L0.5 9Z" fill="#f0f4f9" stroke="#8494ac"/></svg>
<div class="a" style="left:1037.8px;top:765.5px;width:13px;height:13.5px;border-radius:50%;border:1px solid #8ea2c0;background:radial-gradient(circle at 50% 30%,#fff,#d4def0)"></div>
<div class="a" style="left:1040.5px;top:771.5px;width:7.5px;height:1.8px;background:#303848"></div>
<div class="a" style="left:1043.4px;top:768.3px;width:1.8px;height:8px;background:#303848"></div>
<div class="a" style="left:1056px;top:764px;width:13.3px;height:14.6px;border:1px solid #9aacc6;border-radius:2px;background:#e8eef6"></div>
<svg class="a" style="left:1058px;top:766px" width="10" height="11"><path d="M1 1H4M1 1V4M9 1H6M9 1V4M1 10H4M1 10V7M9 10H6M9 10V7" stroke="#222" stroke-width="1.3"/><rect x="3.5" y="3.5" width="3" height="4" fill="#444"/></svg>
<svg class="a" style="left:1074px;top:768px" width="10" height="12"><g fill="#6a7a96"><rect x="7" y="1" width="1.5" height="1.5"/><rect x="4" y="4.5" width="1.5" height="1.5"/><rect x="7" y="4.5" width="1.5" height="1.5"/><rect x="1" y="8" width="1.5" height="1.5"/><rect x="4" y="8" width="1.5" height="1.5"/><rect x="7" y="8" width="1.5" height="1.5"/></g></svg>
<!-- IME toolbar -->
<div class="a" style="left:772.3px;top:757.5px;width:167.3px;height:26.5px;background:#fff;border:1px solid #e4e6ea;border-right:none"></div>
<svg class="a" style="left:748px;top:752px" width="29" height="34" viewBox="0 0 29 34">
 <path d="M4 6 L22 1.5 Q26 0.8 26.8 4.5 L28 27 Q28.3 30.8 24.5 31.5 L7 33.5 Q3.2 34 2.7 30.5 L0.8 10 Q0.5 6.8 4 6Z" fill="#f05a24"/>
 <path d="M20 9.5 Q17 7 12 8 Q7 9.5 8 14 Q9 17 15 18 Q20 19 19 23 Q17.5 26.5 10 24.5" stroke="#fff" stroke-width="4" fill="none" stroke-linecap="round"/>
</svg>
<svg class="a" style="left:780px;top:764px" width="15" height="14" viewBox="0 0 15 14"><rect x="1.3" y="3.3" width="12" height="6.5" fill="none" stroke="#1a6fd8" stroke-width="2.6"/><rect x="6" y="0" width="2.8" height="14" fill="#1a6fd8"/></svg>
<svg class="a" style="left:803px;top:766px" width="11" height="11" viewBox="0 0 11 11"><circle cx="2.5" cy="3" r="1.5" fill="none" stroke="#1a6fd8" stroke-width="1.2"/><path d="M8 5 Q9.5 5 9 8 Q8.5 10 7 11" stroke="#1a6fd8" stroke-width="2" fill="none"/></svg>
<svg class="a" style="left:822px;top:763px" width="11" height="17" viewBox="0 0 11 17"><rect x="3" y="0" width="5" height="10" rx="2.5" fill="#1a6fd8"/><path d="M1 7 Q1 12 5.5 12 Q10 12 10 7" stroke="#1a6fd8" stroke-width="1.5" fill="none"/><path d="M5.5 12V15.5M3 16H8" stroke="#1a6fd8" stroke-width="1.5"/></svg>
<svg class="a" style="left:842px;top:765px" width="14" height="12" viewBox="0 0 14 12"><rect x="0.8" y="0.8" width="12.4" height="10.4" rx="1.5" fill="none" stroke="#1a6fd8" stroke-width="1.6"/><g fill="#1a6fd8"><rect x="3" y="3" width="1.5" height="1.5"/><rect x="6" y="3" width="1.5" height="1.5"/><rect x="9" y="3" width="1.5" height="1.5"/><rect x="3" y="5.5" width="1.5" height="1.5"/><rect x="6" y="5.5" width="1.5" height="1.5"/><rect x="9" y="5.5" width="1.5" height="1.5"/><rect x="3.5" y="8" width="7" height="1.5"/></g></svg>
<svg class="a" style="left:862px;top:764px" width="14" height="14" viewBox="0 0 14 14"><defs><linearGradient id="shirt" x1="0" y1="0" x2="1" y2="1"><stop offset="0" stop-color="#6a6cf0"/><stop offset="1" stop-color="#b05ad8"/></linearGradient></defs><path d="M4 0.5 L7 2 L10 0.5 L13.5 3 L12 6.5 L10.5 6 V13.5 H3.5 V6 L2 6.5 L0.5 3Z" fill="url(#shirt)"/></svg>
<svg class="a" style="left:881.5px;top:763px" width="15" height="15" viewBox="0 0 15 15"><path d="M7.5 0V3" stroke="#1a6fd8" stroke-width="1.5"/><rect x="0.5" y="3.5" width="14" height="11" rx="5.5" fill="#1a6fd8"/><rect x="3" y="7.5" width="3" height="1.4" fill="#fff"/><rect x="3.8" y="6.6" width="1.4" height="3.2" fill="#fff"/><circle cx="10" cy="8.5" r="1.5" fill="#fff"/></svg>
<svg class="a" style="left:904px;top:764px" width="12" height="13" viewBox="0 0 12 13"><rect x="0" y="0" width="5" height="6" rx="1.5" fill="#1a6fd8"/><rect x="7" y="0" width="5" height="6" rx="1.5" fill="#1a6fd8"/><rect x="0" y="7" width="5" height="6" rx="1.5" fill="#1a6fd8"/><rect x="7" y="7" width="5" height="6" rx="1.5" fill="#1a6fd8"/><rect x="8.2" y="1.2" width="2.6" height="3.6" rx="1.2" fill="#fff"/></svg>
<svg class="a" style="left:923.5px;top:763px" width="13" height="15" viewBox="0 0 13 15"><path d="M6.5 0 L8.2 2.5 L11.5 2.2 L11 5.5 L13 7.5 L11 9.5 L11.5 12.8 L8.2 12.5 L6.5 15 L4.8 12.5 L1.5 12.8 L2 9.5 L0 7.5 L2 5.5 L1.5 2.2 L4.8 2.5Z" fill="#1a6fd8"/><circle cx="6.5" cy="7.5" r="2.5" fill="#fff"/><rect x="5.5" y="9.5" width="2" height="3" fill="#fff"/></svg>

<!-- speaking badge -->
<div class="a" style="left:734px;top:45px;width:200px;height:36px;background:#2a2d31;border:1px solid #1b1d20;box-shadow:0 0 1px #222"></div>
<svg class="a" style="left:743px;top:55px" width="12" height="15" viewBox="0 0 12 15"><rect x="3.5" y="0.5" width="5" height="9" rx="2.5" fill="#8a8c90"/><path d="M1.5 6.5 Q1.5 11 6 11 Q10.5 11 10.5 6.5" stroke="#8a8c90" stroke-width="1.2" fill="none"/><path d="M6 11V14M3.5 14.3H8.5" stroke="#8a8c90" stroke-width="1.2"/><path d="M0.5 14 L11.5 0.8" stroke="#d8402c" stroke-width="1.4"/></svg>
<div class="a" style="left:763px;top:53px;width:1px;height:20px;background:#45484d"></div>
<svg class="a" style="left:902px;top:51px" width="32" height="24" viewBox="0 0 32 24"><path d="M0 14 L9 2 Q10.5 0.5 12 2 L17 9 L9 22 Z" fill="#3a3d42"/><path d="M11 15 L20 3 Q21.5 1.5 23 3 L32 14 L32 22 L20 22Z" fill="#3d4045"/></svg>

<!-- mouse cursor -->
<svg class="a" style="left:848.5px;top:323px" width="12" height="20" viewBox="0 0 12 20"><path d="M1 1 V15.5 L4.5 12.5 L7 18.5 L9 17.6 L6.6 11.8 H11 Z" fill="#fff" stroke="#555" stroke-width="1"/></svg>
<!-- ===== RIGHT PANEL ===== -->
<div class="a" style="left:1085px;top:28px;width:7px;height:805px;background:#55585c"></div>
<div class="a" style="left:1092px;top:28px;width:176px;height:805px;background:linear-gradient(90deg,#45484c,#36393d 50%,#27292c)"></div>
<div class="a" style="left:1260px;top:28px;width:8px;height:805px;background:#232528"></div>
<div class="tile" style="top:28px"></div>
<div class="tile" style="top:153px"></div>
<div class="tile" style="top:278px"></div>
<div class="tile" style="top:403px"></div>
<div class="tile" style="top:528px"></div>
<div class="tile" style="top:653px"></div>
<div class="tile" style="top:778px;height:60px;border-bottom:none"></div>
<!-- avatars -->
<svg class="a" style="left:1149.8px;top:42.5px" width="53" height="66" viewBox="0 0 53 66">
 <defs><clipPath id="c1"><ellipse cx="26.5" cy="33" rx="26.3" ry="32.6"/></clipPath>
 <linearGradient id="a1" x1="0" y1="0" x2="0" y2="1"><stop offset="0" stop-color="#e4e4e4"/><stop offset=".28" stop-color="#d4d6d2"/><stop offset=".32" stop-color="#8a8272"/><stop offset=".35" stop-color="#5f8a56"/><stop offset=".45" stop-color="#5a8650"/><stop offset=".47" stop-color="#7a6e60"/><stop offset=".52" stop-color="#6e7a5a"/><stop offset=".55" stop-color="#bcb0a2"/><stop offset=".74" stop-color="#b4a89a"/><stop offset=".78" stop-color="#9a948c"/><stop offset="1" stop-color="#7e7a78"/></linearGradient></defs>
 <g clip-path="url(#c1)"><rect width="53" height="66" fill="url(#a1)"/>
  <path d="M22 17 Q26 10 30 14 L34 9 H39 L40 18 Q44 12 47 16 L48 21 H21Z" fill="#6a6c6a" opacity=".75"/>
  <path d="M31 9H40" stroke="#444" stroke-width="1"/>
  <path d="M24 26 L21 22 L22 20" stroke="#d8b8a8" stroke-width="1.5" fill="none"/>
  <rect x="24" y="24" width="8.5" height="14" rx="1" fill="#ece6d2"/><rect x="24.5" y="38" width="7" height="3.5" fill="#f4f4f4"/>
  <path d="M25.5 41.5V56M29.5 41.5V56" stroke="#d8b0a0" stroke-width="2"/><rect x="24" y="56" width="7.5" height="3" fill="#e8386a"/>
  <ellipse cx="27.5" cy="20" rx="2.6" ry="2.4" fill="#1e1e1e"/><rect x="31" y="44" width="13" height="4" fill="#161616"/>
 </g></svg>
<svg class="a" style="left:1149.8px;top:167.5px" width="53" height="66" viewBox="0 0 53 66">
 <defs><clipPath id="c2"><ellipse cx="26.5" cy="33" rx="26.3" ry="32.6"/></clipPath></defs>
 <g clip-path="url(#c2)"><rect width="53" height="66" fill="#c9d5ae"/>
  <path d="M12 30 Q10 20 12 9 L19 16 Q28 14 33 16 L40 12 Q43 22 41 30 Q44 38 38 44 Q30 48 18 46 Q10 42 12 30Z" fill="#fbfbf8"/>
  <path d="M10 44 Q20 50 36 46 L46 48 L52 56 L53 66 H0 V56Z" fill="#fbfbf8"/>
  <path d="M40 26 Q50 30 51 40 L44 42 Q42 34 40 30Z" fill="#ecb280"/>
  <path d="M41 40 Q49 38 51 48 Q50 56 43 56 Q37 50 41 40Z" fill="#b2aaa4"/>
  <path d="M20 17 Q27 15 32 20 Q30 27 24 27 Q19 24 20 17Z" fill="#b6aeaa"/><path d="M20 20 Q22 18 24 20" stroke="#e8a070" stroke-width="2.2"/>
  <path d="M16 26 Q18 24 20 26M27 26 Q29 24 31 26M21 31 Q23 33 25 31" stroke="#555" stroke-width=".8" fill="none"/>
  <path d="M14 43 Q24 48 36 44" stroke="#d03a2e" stroke-width="1.6" fill="none"/><circle cx="23" cy="46" r="1.3" fill="#e8c040"/>
  <path d="M53 58 V66 H0 V60 Q14 64 28 64 Q42 63 53 58Z" fill="#8aaa72"/>
 </g></svg>
<svg class="a" style="left:1149.8px;top:292.5px" width="53" height="66" viewBox="0 0 53 66">
 <defs><clipPath id="c3"><ellipse cx="26.5" cy="33" rx="26.3" ry="32.6"/></clipPath></defs>
 <g clip-path="url(#c3)"><rect width="53" height="66" fill="#efe9e6"/>
  <path d="M5 0V66M10 0V66M15 0V66" stroke="#e2dad6" stroke-width="1.5"/>
  <path d="M38 28 Q48 30 48 44 L44 52 L38 46Z" fill="#2a2020"/>
  <path d="M24 22 Q30 16 38 20 L40 30 Q36 38 28 34 Q24 30 24 22Z" fill="#eed2c8"/>
  <path d="M22 12 Q26 4 36 5 Q45 7 44 16 Q42 22 30 20 Q22 20 22 12Z" fill="#d81c2a"/>
  <path d="M22 26 Q20 20 24 20 L26 24 Q30 22 32 28 L30 44 Q28 52 24 56 L20 54 Q22 40 22 26Z" fill="#f0c8bc"/>
  <path d="M26 38 Q34 32 44 38 Q50 44 50 58 L48 62 H24 Q20 52 26 38Z" fill="#f2d8d4"/>
  <g fill="#e0a8a8"><circle cx="36" cy="44" r=".8"/><circle cx="42" cy="48" r=".8"/><circle cx="34" cy="52" r=".8"/><circle cx="44" cy="54" r=".8"/></g>
  <rect x="14" y="58" width="36" height="8" fill="#d82030"/>
  <path d="M11 35 Q9 32 12 31.5 Q13.5 31.5 13.5 33 Q13.5 31.5 15 31.5 Q18 32 16 35 L13.5 38Z" fill="#e8382a"/>
 </g></svg>
<svg class="a" style="left:1149.8px;top:417.5px" width="53" height="66" viewBox="0 0 53 66">
 <defs><clipPath id="c4"><ellipse cx="26.5" cy="33" rx="26.3" ry="32.6"/></clipPath>
 <radialGradient id="a4" cx=".6" cy=".35" r=".8"><stop offset="0" stop-color="#7a4aaa"/><stop offset=".5" stop-color="#5a3aa8"/><stop offset="1" stop-color="#6a3a9a"/></radialGradient></defs>
 <g clip-path="url(#c4)"><rect width="53" height="66" fill="url(#a4)"/>
  <ellipse cx="36" cy="24" rx="14" ry="6" fill="#a05a9a" opacity=".55"/><ellipse cx="20" cy="42" rx="12" ry="4" fill="#a05090" opacity=".5"/><ellipse cx="42" cy="48" rx="10" ry="4" fill="#9a5a9a" opacity=".45"/>
  <g fill="#fff" opacity=".8"><circle cx="8" cy="32" r=".7"/><circle cx="17" cy="19" r=".6"/><circle cx="28" cy="10" r=".6"/><circle cx="41" cy="17" r=".6"/><circle cx="50" cy="29" r=".7"/><circle cx="15" cy="28" r=".5"/><circle cx="35" cy="38" r=".5"/></g>
  <path d="M20 66 L22 47 Q25 43 29 46 L32 66Z" fill="#140c1e"/>
 </g></svg>
<svg class="a" style="left:1149.8px;top:542.5px" width="53" height="66" viewBox="0 0 53 66">
 <defs><clipPath id="c5"><ellipse cx="26.5" cy="33" rx="26.3" ry="32.6"/></clipPath></defs>
 <g clip-path="url(#c5)"><rect width="53" height="66" fill="#fbfbfb"/>
  <path d="M26 40 Q34 36 44 44 L52 56 L50 66 H22Z" fill="#f8f6ee" stroke="#dcd4bc" stroke-width=".6"/>
  <path d="M30 36 L32 48 L30 60" stroke="#e6d8a8" stroke-width="1" fill="none"/>
  <path d="M22 26 Q24 22 30 24 L34 34 Q30 40 26 38 Q22 34 22 26Z" fill="#f2d4c8"/>
  <path d="M14 24 Q12 12 24 9 Q36 6 42 14 Q46 22 42 30 Q40 36 36 38 L34 28 Q30 20 24 22 L22 30 Q16 30 14 24Z" fill="#f0d88c"/>
  <path d="M18 14 Q22 8 30 10M30 10 L40 16" stroke="#d8b860" stroke-width=".8" fill="none"/>
  <path d="M40 12 L46 8 L44 14Z" fill="#f0c8c0"/>
  <path d="M4 54 L20 44 L24 56 L22 66 H8Z" fill="#c43424"/>
 </g></svg>
<svg class="a" style="left:1149.8px;top:667.5px" width="53" height="66" viewBox="0 0 53 66">
 <defs><clipPath id="c6"><ellipse cx="26.5" cy="33" rx="26.3" ry="32.6"/></clipPath>
 <linearGradient id="a6" x1="0" y1="0" x2="0" y2="1"><stop offset="0" stop-color="#1a58c8"/><stop offset=".45" stop-color="#3a86de"/><stop offset=".68" stop-color="#9cc4ec"/><stop offset=".72" stop-color="#c0d4e0"/></linearGradient></defs>
 <g clip-path="url(#c6)"><rect width="53" height="66" fill="url(#a6)"/>
  <g fill="#fff" opacity=".95"><circle cx="22" cy="2" r="3"/><circle cx="27" cy="1.5" r="3.5"/><circle cx="24" cy="20" r="2.5"/><circle cx="29" cy="18.5" r="3"/><circle cx="34" cy="19" r="2.5"/><rect x="22" y="19" width="18" height="3" rx="1.5"/><circle cx="30" cy="27" r="2.5"/><circle cx="34" cy="27.5" r="2"/><rect x="26" y="27" width="11" height="3" rx="1.5"/><circle cx="29" cy="36" r="2.3"/><circle cx="34" cy="35.5" r="2.5"/><rect x="23" y="36" width="22" height="2.5" rx="1.2"/><circle cx="41" cy="13" r="1.8"/><rect x="39" y="13" width="6" height="1.8" rx=".9"/></g>
  <rect x="0" y="46" width="53" height="3" fill="#7a8a70"/>
  <rect x="0" y="49" width="53" height="17" fill="#a0a866"/>
  <path d="M24 49 L29 49 L42 66 L10 66Z" fill="#8c8a88"/>
 </g></svg>
<svg class="a" style="left:1149.8px;top:792.5px" width="53" height="41" viewBox="0 0 53 41">
 <defs><clipPath id="c7"><ellipse cx="26.5" cy="33" rx="26.3" ry="32.6"/></clipPath></defs>
 <g clip-path="url(#c7)"><rect width="53" height="66" fill="#7c6e7c"/>
  <path d="M0 0 H53 V14 Q36 6 22 10 Q8 14 0 26Z" fill="#584a56"/>
  <path d="M16 22 Q18 12 28 12 Q40 14 42 24 L44 41 H12Z" fill="#d6b8bc"/>
  <path d="M14 14 Q20 8 30 10 L24 20 Q18 26 14 30Z" fill="#5a4450"/>
  <path d="M44 16 L53 8 V41 H46Z" fill="#c4d0ec"/>
  <path d="M20 30 Q24 29 27 31M31 31 Q35 29 38 31" stroke="#6a5060" stroke-width="1" fill="none"/>
  <path d="M4 6 L12 1 L9 12Z" fill="#e8e8f4"/>
 </g></svg>
<!-- name badges -->
<div class="nb" style="top:120px;width:73.4px"></div>
<div class="nb" style="top:245px;width:113.8px"></div>
<div class="nb" style="top:370px;width:123.8px"></div>
<div class="nb" style="top:495px;width:85.7px"></div>
<div class="nb" style="top:620px;width:89px"></div>
<div class="nb" style="top:745px;width:73.7px"></div>
<div class="a" style="left:1092px;top:120px;width:18.7px;height:21.5px;background:#f5821f"></div><div class="a" style="left:1092px;top:142.5px;width:18.7px;height:1.2px;background:#a06a40"></div>
<div class="a" style="left:1092px;top:745px;width:18.8px;height:21.5px;background:#0a6bf5"></div>
<div class="a" style="left:1092px;top:766.5px;width:18.8px;height:1.5px;background:#3a6ac8"></div>
<svg class="a" style="left:1094px;top:124px" width="15" height="16" viewBox="0 0 15 16"><circle cx="7.5" cy="4.5" r="3.3" fill="#fff"/><path d="M1 15 Q1.5 9 7.5 9 Q13.5 9 14 15Z" fill="#fff"/></svg>
<svg class="a" style="left:1094px;top:749px" width="15" height="16" viewBox="0 0 15 16"><circle cx="7.5" cy="4.5" r="3.3" fill="#fff"/><path d="M1 15 Q1.5 9 7.5 9 Q13.5 9 14 15Z" fill="#fff"/></svg>
<!-- muted mic icons -->
<svg class="a mic" style="left:1113.5px;top:125px" width="12" height="15" viewBox="0 0 12 15"><rect x="3.5" y="0.5" width="5" height="9" rx="2.5" fill="#e8e8e8"/><path d="M1.5 6.5 Q1.5 11 6 11 Q10.5 11 10.5 6.5" stroke="#e8e8e8" stroke-width="1.2" fill="none"/><path d="M6 11V14M3.5 14.3H8.5" stroke="#e8e8e8" stroke-width="1.2"/><path d="M0.8 14 L11.2 1" stroke="#d8402c" stroke-width="1.4"/></svg>
<svg class="a mic" style="left:1094.5px;top:250px" width="12" height="15" viewBox="0 0 12 15"><rect x="3.5" y="0.5" width="5" height="9" rx="2.5" fill="#e8e8e8"/><path d="M1.5 6.5 Q1.5 11 6 11 Q10.5 11 10.5 6.5" stroke="#e8e8e8" stroke-width="1.2" fill="none"/><path d="M6 11V14M3.5 14.3H8.5" stroke="#e8e8e8" stroke-width="1.2"/><path d="M0.8 14 L11.2 1" stroke="#d8402c" stroke-width="1.4"/></svg>
<svg class="a mic" style="left:1094.5px;top:375px" width="12" height="15" viewBox="0 0 12 15"><rect x="3.5" y="0.5" width="5" height="9" rx="2.5" fill="#e8e8e8"/><path d="M1.5 6.5 Q1.5 11 6 11 Q10.5 11 10.5 6.5" stroke="#e8e8e8" stroke-width="1.2" fill="none"/><path d="M6 11V14M3.5 14.3H8.5" stroke="#e8e8e8" stroke-width="1.2"/><path d="M0.8 14 L11.2 1" stroke="#d8402c" stroke-width="1.4"/></svg>
<svg class="a mic" style="left:1094.5px;top:500px" width="12" height="15" viewBox="0 0 12 15"><rect x="3.5" y="0.5" width="5" height="9" rx="2.5" fill="#e8e8e8"/><path d="M1.5 6.5 Q1.5 11 6 11 Q10.5 11 10.5 6.5" stroke="#e8e8e8" stroke-width="1.2" fill="none"/><path d="M6 11V14M3.5 14.3H8.5" stroke="#e8e8e8" stroke-width="1.2"/><path d="M0.8 14 L11.2 1" stroke="#d8402c" stroke-width="1.4"/></svg>
<svg class="a mic" style="left:1094.5px;top:625px" width="12" height="15" viewBox="0 0 12 15"><rect x="3.5" y="0.5" width="5" height="9" rx="2.5" fill="#e8e8e8"/><path d="M1.5 6.5 Q1.5 11 6 11 Q10.5 11 10.5 6.5" stroke="#e8e8e8" stroke-width="1.2" fill="none"/><path d="M6 11V14M3.5 14.3H8.5" stroke="#e8e8e8" stroke-width="1.2"/><path d="M0.8 14 L11.2 1" stroke="#d8402c" stroke-width="1.4"/></svg>
<svg class="a mic" style="left:1113.5px;top:750px" width="12" height="15" viewBox="0 0 12 15"><rect x="3.5" y="0.5" width="5" height="9" rx="2.5" fill="#e8e8e8"/><path d="M1.5 6.5 Q1.5 11 6 11 Q10.5 11 10.5 6.5" stroke="#e8e8e8" stroke-width="1.2" fill="none"/><path d="M6 11V14M3.5 14.3H8.5" stroke="#e8e8e8" stroke-width="1.2"/><path d="M0.8 14 L11.2 1" stroke="#d8402c" stroke-width="1.4"/></svg>


<!-- share label -->
<div class="a" style="left:1px;top:810.3px;width:118px;height:23px;background:#141516;border-radius:0 5px 0 0"></div>
<svg class="a" style="left:5px;top:814.5px" width="11" height="16" viewBox="0 0 11 16"><rect x="3" y="0.6" width="5" height="9.5" rx="2.5" fill="#2ee05a" stroke="#f0f0f0" stroke-width="1"/><path d="M3 0.6 H8 V4 H3Z" fill="#f0f0f0"/><path d="M1 7 Q1 12 5.5 12 Q10 12 10 7" stroke="#f0f0f0" stroke-width="1.2" fill="none"/><path d="M5.5 12V15.5" stroke="#f0f0f0" stroke-width="1.2"/></svg>
<svg class="a" style="left:19px;top:817px" width="12" height="13" viewBox="0 0 12 13"><rect x="0.5" y="0.5" width="11" height="9" rx="1.5" fill="#f4f4f4"/><path d="M3 7 L8 4 L7 6.5Z" fill="#333"/><rect x="3" y="11" width="6" height="1.5" fill="#f4f4f4"/></svg>
<!-- recording badge -->
<div class="a" style="left:11px;top:66.5px;width:59px;height:30px;border-radius:3px;background:rgba(16,16,16,.62)"></div>
<svg class="a" style="left:16px;top:74px" width="15" height="14" viewBox="0 0 15 14"><path d="M3 13 Q0 13 0.5 10 Q1 7.5 3.5 7.8 Q3.5 3 7.5 2 Q11.5 1.5 12.5 5.5 Q9 6.5 9 10 Q9 12 10.5 13Z" fill="#fff"/><circle cx="11.3" cy="9.8" r="3" fill="#f03232"/></svg>
<div class="a" style="left:0;top:28px;width:1px;height:805px;background:#eef2f6"></div>
<div class="a" style="left:1px;top:77px;width:1px;height:708px;background:#dfe8f2"></div>

<!-- texts -->
<div class="t" id="tx0" style="left:612.68px;top:7.00px;font-size:13.02px;font-family:'Liberation Sans',sans-serif;font-weight:normal;color:#333;transform:scaleX(0.8415);">腾讯会议</div>
<div class="t" id="tx1" style="left:33.83px;top:76.00px;font-size:10.98px;font-family:'Liberation Sans',sans-serif;font-weight:normal;color:#fff;transform:scaleX(0.9274);">录制中</div>
<div class="t" id="tx2" style="left:770.82px;top:57.00px;font-size:11.69px;font-family:'Liberation Sans',sans-serif;font-weight:normal;color:#e8e8e8;transform:scaleX(0.8269);">正在讲话：王建华;</div>
<div class="t" id="tx3" style="left:363.00px;top:87.19px;font-size:11.43px;font-family:'Liberation Sans',sans-serif;font-weight:normal;color:#3c3c3c;transform:scaleX(0.9519);">认知翻译研究与文化传播（闽南师大2023）[兼容模式] - Microsoft PowerPoint</div>
<div class="t" id="tx4" style="left:48.66px;top:116.62px;font-size:11.26px;font-family:'Liberation Sans',sans-serif;font-weight:normal;color:#15428b;transform:scaleX(0.9195);">开始</div>
<div class="t" id="tx5" style="left:85.96px;top:117.00px;font-size:10.88px;font-family:'Liberation Sans',sans-serif;font-weight:normal;color:#15428b;transform:scaleX(0.8906);">插入</div>
<div class="t" id="tx6" style="left:122.02px;top:117.00px;font-size:11.26px;font-family:'Liberation Sans',sans-serif;font-weight:normal;color:#15428b;transform:scaleX(0.9531);">设计</div>
<div class="t" id="tx7" style="left:158.98px;top:116.62px;font-size:11.46px;font-family:'Liberation Sans',sans-serif;font-weight:normal;color:#15428b;transform:scaleX(0.9371);">动画</div>
<div class="t" id="tx8" style="left:195.82px;top:117.00px;font-size:10.88px;font-family:'Liberation Sans',sans-serif;font-weight:normal;color:#15428b;transform:scaleX(0.9290);">幻灯片放映</div>
<div class="t" id="tx9" style="left:262.66px;top:117.18px;font-size:10.88px;font-family:'Liberation Sans',sans-serif;font-weight:normal;color:#15428b;transform:scaleX(0.9377);">审阅</div>
<div class="t" id="tx10" style="left:299.83px;top:117.00px;font-size:11.07px;font-family:'Liberation Sans',sans-serif;font-weight:normal;color:#15428b;transform:scaleX(0.9147);">视图</div>
<div class="t" id="tx11" style="left:12.00px;top:176.81px;font-size:11.26px;font-family:'Liberation Sans',sans-serif;font-weight:normal;color:#15428b;transform:scaleX(0.9521);">粘贴</div>
<div class="t" id="tx12" style="left:54.69px;top:142.16px;font-size:9.84px;font-family:'Liberation Sans',sans-serif;font-weight:normal;color:#8e9cb3;transform:scaleX(1.0376);">剪切</div>
<div class="t" id="tx13" style="left:54.77px;top:161.83px;font-size:10.34px;font-family:'Liberation Sans',sans-serif;font-weight:normal;color:#8e9cb3;transform:scaleX(1.0618);">复制</div>
<div class="t" id="tx14" style="left:56.00px;top:184.00px;font-size:9.56px;font-family:'Liberation Sans',sans-serif;font-weight:normal;color:#8e9cb3;transform:scaleX(1.0339);">格式刷</div>
<div class="t" id="tx15" style="left:24.62px;top:216.19px;font-size:11.30px;font-family:'Liberation Sans',sans-serif;font-weight:normal;color:#3e67a5;transform:scaleX(0.9375);">剪贴板</div>
<div class="t" id="tx16" style="left:104.77px;top:176.89px;font-size:12.29px;font-family:'Liberation Sans',sans-serif;font-weight:normal;color:#15428b;transform:scaleX(0.8558);">新建</div>
<div class="t" id="tx17" style="left:95.83px;top:193.00px;font-size:11.79px;font-family:'Liberation Sans',sans-serif;font-weight:normal;color:#15428b;transform:scaleX(0.8069);">幻灯片</div>
<div class="t" id="tx18" style="left:151.87px;top:141.00px;font-size:11.79px;font-family:'Liberation Sans',sans-serif;font-weight:normal;color:#15428b;transform:scaleX(0.7897);">版式</div>
<div class="t" id="tx19" style="left:151.85px;top:162.00px;font-size:12.11px;font-family:'Liberation Sans',sans-serif;font-weight:normal;color:#15428b;transform:scaleX(0.8144);">重设</div>
<div class="t" id="tx20" style="left:151.87px;top:183.82px;font-size:11.07px;font-family:'Liberation Sans',sans-serif;font-weight:normal;color:#15428b;transform:scaleX(0.8829);">删除</div>
<div class="t" id="tx21" style="left:123.84px;top:216.00px;font-size:11.69px;font-family:'Liberation Sans',sans-serif;font-weight:normal;color:#3e67a5;transform:scaleX(0.8149);">幻灯片</div>
<div class="t" id="tx22" style="left:252.66px;top:215.19px;font-size:11.49px;font-family:'Liberation Sans',sans-serif;font-weight:normal;color:#3e67a5;transform:scaleX(0.9002);">字体</div>
<div class="t" id="tx23" style="left:488.65px;top:141.19px;font-size:11.49px;font-family:'Liberation Sans',sans-serif;font-weight:normal;color:#8e9cb3;transform:scaleX(0.9588);">文字方向</div>
<div class="t" id="tx24" style="left:487.83px;top:163.18px;font-size:10.68px;font-family:'Liberation Sans',sans-serif;font-weight:normal;color:#8e9cb3;transform:scaleX(0.9262);">对齐文本</div>
<div class="t" id="tx25" style="left:488.00px;top:184.00px;font-size:11.59px;font-family:'Liberation Sans',sans-serif;font-weight:normal;color:#8e9cb3;transform:scaleX(0.9089);">转换为 SmartArt</div>
<div class="t" id="tx26" style="left:449.00px;top:216.00px;font-size:10.86px;font-family:'Liberation Sans',sans-serif;font-weight:normal;color:#3e67a5;transform:scaleX(0.8987);">段落</div>
<div class="t" id="tx27" style="left:698.00px;top:176.82px;font-size:11.07px;font-family:'Liberation Sans',sans-serif;font-weight:normal;color:#15428b;transform:scaleX(0.9346);">排列</div>
<div class="t" id="tx28" style="left:726.34px;top:176.00px;font-size:12.41px;font-family:'Liberation Sans',sans-serif;font-weight:normal;color:#8e9cb3;transform:scaleX(0.8473);">快速样式</div>
<div class="t" id="tx29" style="left:784.65px;top:142.16px;font-size:9.84px;font-family:'Liberation Sans',sans-serif;font-weight:normal;color:#8e9cb3;transform:scaleX(1.0317);">形状填充</div>
<div class="t" id="tx30" style="left:784.66px;top:162.18px;font-size:10.62px;font-family:'Liberation Sans',sans-serif;font-weight:normal;color:#8e9cb3;transform:scaleX(0.9349);">形状轮廓</div>
<div class="t" id="tx31" style="left:784.65px;top:182.82px;font-size:10.88px;font-family:'Liberation Sans',sans-serif;font-weight:normal;color:#8e9cb3;transform:scaleX(0.9393);">形状效果</div>
<div class="t" id="tx32" style="left:691.98px;top:215.81px;font-size:11.26px;font-family:'Liberation Sans',sans-serif;font-weight:normal;color:#3e67a5;transform:scaleX(0.9369);">绘图</div>
<div class="t" id="tx33" style="left:859.83px;top:141.00px;font-size:10.27px;font-family:'Liberation Sans',sans-serif;font-weight:normal;color:#15428b;transform:scaleX(1.0496);">查找</div>
<div class="t" id="tx34" style="left:859.48px;top:163.00px;font-size:11.59px;font-family:'Liberation Sans',sans-serif;font-weight:normal;color:#15428b;transform:scaleX(0.8677);">替换</div>
<div class="t" id="tx35" style="left:859.82px;top:183.00px;font-size:10.88px;font-family:'Liberation Sans',sans-serif;font-weight:normal;color:#15428b;transform:scaleX(0.9517);">选择</div>
<div class="t" id="tx36" style="left:855.83px;top:216.00px;font-size:11.90px;font-family:'Liberation Sans',sans-serif;font-weight:normal;color:#3e67a5;transform:scaleX(0.8621);">编辑</div>
<div class="t" id="tx37" style="left:7.05px;top:239.20px;font-size:12.00px;font-family:'Liberation Sans',sans-serif;font-weight:bold;color:#1b2a78;transform:scaleX(0.7842);">幻灯片</div>
<div class="t" id="tx38" style="left:46.46px;top:239.00px;font-size:12.10px;font-family:'Liberation Sans',sans-serif;font-weight:normal;color:#2b3f88;transform:scaleX(0.8428);">大纲</div>
<div class="t" id="tx39" style="left:442.52px;top:341.10px;font-size:32.86px;font-family:'Liberation Sans',sans-serif;font-weight:bold;color:#000;transform:scaleX(0.9490);">认知翻译研究与文化传播</div>
<div class="t" id="tx40" style="left:561.60px;top:464.00px;font-size:26.74px;font-family:'Liberation Sans',sans-serif;font-weight:300;color:#9a9a9a;transform:scaleX(0.8077);">王建华</div>
<div class="t" id="tx41" style="left:640.65px;top:464.11px;font-size:26.74px;font-family:'Liberation Sans',sans-serif;font-weight:300;color:#9a9a9a;transform:scaleX(0.7941);">教授</div>
<div class="t" id="tx42" style="left:506.62px;top:584.00px;font-size:25.02px;font-family:'Liberation Sans',sans-serif;font-weight:300;color:#9a9a9a;transform:scaleX(0.9035);">华侨大学/中国人民大学</div>
<div class="t" id="tx43" style="left:182.79px;top:741.26px;font-size:15.36px;font-family:'Liberation Serif',serif;font-weight:normal;color:#2a2a2a;transform:scaleX(0.8933);">单击此处添加备注</div>
<div class="t" id="tx44" style="left:6.83px;top:767.00px;font-size:11.17px;font-family:'Liberation Sans',sans-serif;font-weight:normal;color:#263c64;transform:scaleX(0.9532);">幻灯片 1/21</div>
<div class="t" id="tx45" style="left:79.63px;top:767.18px;font-size:10.98px;font-family:'Liberation Sans',sans-serif;font-weight:normal;color:#263c64;transform:scaleX(0.9745);">"Office 主题"</div>
<div class="t" id="tx46" style="left:156.48px;top:767.00px;font-size:10.65px;font-family:'Liberation Sans',sans-serif;font-weight:normal;color:#263c64;transform:scaleX(0.9325);">中文(简体，中国)</div>
<div class="t" id="tx47" style="left:32.84px;top:817.18px;font-size:10.80px;font-family:'Liberation Sans',sans-serif;font-weight:normal;color:#fff;transform:scaleX(0.8974);">王建华的屏幕共享</div>
<div class="t" id="tx48" style="left:1128.85px;top:128.00px;font-size:11.59px;font-family:'Liberation Sans',sans-serif;font-weight:normal;color:#fff;transform:scaleX(0.8171);">李朝艳</div>
<div class="t" id="tx49" style="left:1109.83px;top:253.00px;font-size:11.59px;font-family:'Liberation Sans',sans-serif;font-weight:normal;color:#fff;transform:scaleX(0.8515);">西大-22专硕-李夏夏</div>
<div class="t" id="tx50" style="left:1109.83px;top:378.00px;font-size:11.59px;font-family:'Liberation Sans',sans-serif;font-weight:normal;color:#fff;transform:scaleX(0.8428);">西大-22级学硕-胡玉梅</div>
<div class="t" id="tx51" style="left:1110.49px;top:502.19px;font-size:11.20px;font-family:'Liberation Sans',sans-serif;font-weight:normal;color:#fff;transform:scaleX(0.9029);">22学硕康露乔</div>
<div class="t" id="tx52" style="left:1110.48px;top:626.80px;font-size:11.79px;font-family:'Liberation Sans',sans-serif;font-weight:normal;color:#fff;transform:scaleX(0.8351);">23学硕 王轶群</div>
<div class="t" id="tx53" style="left:1128.68px;top:752.00px;font-size:11.29px;font-family:'Liberation Sans',sans-serif;font-weight:normal;color:#fff;transform:scaleX(0.9072);">成天娥</div>
<div class="t" id="tx54" style="left:39.14px;top:287.31px;font-size:9.43px;font-family:'Liberation Sans',sans-serif;font-weight:bold;color:#1a1a1a;transform:scaleX(0.8596);">认知翻译研究与文化传播</div>
<div class="t" id="tx55" style="left:67.84px;top:318.00px;font-size:6.41px;font-family:'Liberation Sans',sans-serif;font-weight:normal;color:#8a8a8a;transform:scaleX(0.9653);">王建华 教授</div>
<div class="t" id="tx56" style="left:54.91px;top:349.00px;font-size:6.51px;font-family:'Liberation Sans',sans-serif;font-weight:normal;color:#9a9a9a;transform:scaleX(0.8033);">华侨大学/中国人民大学</div>
<div class="t" id="tx57" style="left:50.76px;top:405.26px;font-size:7.94px;font-family:'Liberation Sans',sans-serif;font-weight:bold;color:#111;transform:scaleX(0.9014);">一、翻译与文化传播</div>
<div class="t" id="tx58" style="left:31.84px;top:423.08px;font-size:5.00px;font-family:'Liberation Sans',sans-serif;font-weight:500;color:#111;transform:scaleX(0.9759);-webkit-text-stroke:0.25px #111">高效的文化传播需要高质量的翻译。任何文化只有</div>
<div class="t" id="tx59" style="left:31.81px;top:432.07px;font-size:4.40px;font-family:'Liberation Sans',sans-serif;font-weight:500;color:#111;transform:scaleX(1.2621);-webkit-text-stroke:0.25px #111">高质量地翻译到目的语才能得到良好的传播效果。</div>
<div class="t" id="tx60" style="left:31.92px;top:438.08px;font-size:5.10px;font-family:'Liberation Sans',sans-serif;font-weight:500;color:#111;transform:scaleX(0.9755);-webkit-text-stroke:0.25px #111">翻译方法和翻译技能只有通过科学的研究才能得到</div>
<div class="t" id="tx61" style="left:32.00px;top:444.00px;font-size:5.08px;font-family:'Liberation Sans',sans-serif;font-weight:500;color:#111;transform:scaleX(0.9096);-webkit-text-stroke:0.25px #111">提升。</div>
<div class="t" id="tx62" style="left:32.00px;top:454.66px;font-size:4.00px;font-family:'Liberation Sans',sans-serif;font-weight:500;color:#111;transform:scaleX(1.1663);-webkit-text-stroke:0.25px #111">认知翻译研究是探索翻译的思维过程。通过这样的过</div>
<div class="t" id="tx63" style="left:32.00px;top:460.08px;font-size:5.00px;font-family:'Liberation Sans',sans-serif;font-weight:500;color:#111;transform:scaleX(0.9789);-webkit-text-stroke:0.25px #111">程研究才能获取有效的翻译方法来应对翻译过程中</div>
<div class="t" id="tx64" style="left:31.67px;top:468.00px;font-size:4.68px;font-family:'Liberation Sans',sans-serif;font-weight:500;color:#111;transform:scaleX(1.0115);-webkit-text-stroke:0.25px #111">的挑战和困难。</div>
<div class="t" id="tx65" style="left:31.91px;top:478.16px;font-size:4.92px;font-family:'Liberation Sans',sans-serif;font-weight:500;color:#111;transform:scaleX(1.0707);-webkit-text-stroke:0.25px #111">本研究通过对认知翻译的案例分析，说明译者</div>
<div class="t" id="tx66" style="left:31.84px;top:483.08px;font-size:5.00px;font-family:'Liberation Sans',sans-serif;font-weight:500;color:#111;transform:scaleX(0.9759);-webkit-text-stroke:0.25px #111">是如何认知翻译过程，从而为未来翻译实践提供有</div>
<div class="t" id="tx67" style="left:31.91px;top:490.08px;font-size:5.00px;font-family:'Liberation Sans',sans-serif;font-weight:500;color:#111;transform:scaleX(1.0144);-webkit-text-stroke:0.25px #111">效的翻译指导方法。</div>
<div class="t" id="tx68" style="left:34.93px;top:536.43px;font-size:2.59px;font-family:'Liberation Serif',serif;font-weight:normal;color:#222;transform:scaleX(1.4109);">本研究以“文化传播”“中国文化外译”和“外译”为主题词</div>
<div class="t" id="tx69" style="left:21.22px;top:541.06px;font-size:3.68px;font-family:'Liberation Serif',serif;font-weight:normal;color:#222;transform:scaleX(1.1321);">，在CNKI（中国知网）数据库中文核心期刊及CSSCI来源</div>
<div class="t" id="tx70" style="left:27.94px;top:547.06px;font-size:3.87px;font-family:'Liberation Serif',serif;font-weight:normal;color:#222;transform:scaleX(1.0387);">期刊中进行检索（截至2023年8月15日），检索时间设定为</div>
<div class="t" id="tx71" style="left:27.87px;top:553.47px;font-size:2.93px;font-family:'Liberation Serif',serif;font-weight:normal;color:#222;transform:scaleX(1.4198);">2000—2022年，去除重复期刊，共计获取论文8528篇，经</div>
<div class="t" id="tx72" style="left:27.92px;top:560.06px;font-size:3.87px;font-family:'Liberation Serif',serif;font-weight:normal;color:#222;transform:scaleX(1.0317);">过统计得到论文数量变化图（王建华 唐建业，2023）</div>
<div class="t" id="tx73" style="left:33.99px;top:661.25px;font-size:7.45px;font-family:'Liberation Sans',sans-serif;font-weight:bold;color:#111;transform:scaleX(1.0012);">二、延安时期成功的外译与传播</div>
<div class="t" id="tx74" style="left:33.63px;top:680.00px;font-size:5.60px;font-family:'Liberation Sans',sans-serif;font-weight:500;color:#111;transform:scaleX(0.9403);-webkit-text-stroke:0.25px #111">1.《红星照耀中国》斯诺+吴光平</div>
<div class="t" id="tx75" style="left:42.00px;top:689.00px;font-size:5.19px;font-family:'Liberation Sans',sans-serif;font-weight:500;color:#111;transform:scaleX(1.0588);-webkit-text-stroke:0.25px #111">伦敦销量230万册+</div>
<div class="t" id="tx76" style="left:33.70px;top:710.09px;font-size:5.60px;font-family:'Liberation Sans',sans-serif;font-weight:500;color:#111;transform:scaleX(0.9539);-webkit-text-stroke:0.25px #111">2. 中国共产党的主张</div>
</body></html>
